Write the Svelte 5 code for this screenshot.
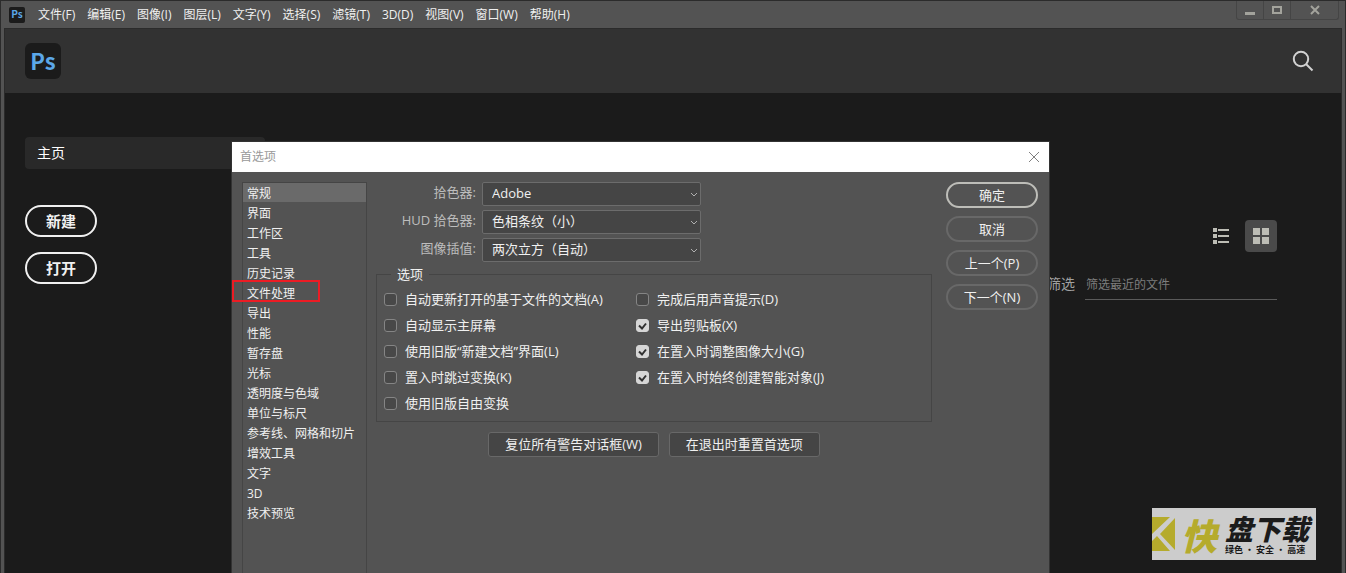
<script lang="ts">
  interface IOption {
    label: string;
    key?: string;
    checked: boolean;
  }

  interface IPicker {
    id: string;
    label: string;
    values: string[];
  }

  const menus = [
    "文件(F)",
    "编辑(E)",
    "图像(I)",
    "图层(L)",
    "文字(Y)",
    "选择(S)",
    "滤镜(T)",
    "3D(D)",
    "视图(V)",
    "窗口(W)",
    "帮助(H)",
  ];

  const sections = [
    "常规",
    "界面",
    "工作区",
    "工具",
    "历史记录",
    "文件处理",
    "导出",
    "性能",
    "暂存盘",
    "光标",
    "透明度与色域",
    "单位与标尺",
    "参考线、网格和切片",
    "增效工具",
    "文字",
    "3D",
    "技术预览",
  ];

  const marked = "文件处理";

  const pickers: IPicker[] = [
    { id: "picker", label: "拾色器:", values: ["Adobe", "Windows"] },
    { id: "hud", label: "HUD 拾色器:", values: ["色相条纹（小）", "色相轮（小）"] },
    { id: "interp", label: "图像插值:", values: ["两次立方（自动）", "两次线性"] },
  ];

  let columns: IOption[][] = $state([
    [
      { label: "自动更新打开的基于文件的文档", key: "A", checked: false },
      { label: "自动显示主屏幕", checked: false },
      { label: "使用旧版“新建文档”界面", key: "L", checked: false },
      { label: "置入时跳过变换", key: "K", checked: false },
      { label: "使用旧版自由变换", checked: false },
    ],
    [
      { label: "完成后用声音提示", key: "D", checked: false },
      { label: "导出剪贴板", key: "X", checked: true },
      { label: "在置入时调整图像大小", key: "G", checked: true },
      { label: "在置入时始终创建智能对象", key: "J", checked: true },
    ],
  ]);

  const actions = ["确定", "取消", "上一个(P)", "下一个(N)"];

  let current = $state("常规");
</script>

<div class="window">
  <header class="titlebar">
    <span class="logo small">Ps</span>
    <nav class="menus">
      {#each menus as menu}
        <button>{menu}</button>
      {/each}
    </nav>
    <div class="controls">
      <button aria-label="最小化">
        <svg width="10" height="10"><path d="M0 8.5h10" stroke-width="3" /></svg>
      </button>
      <button aria-label="最大化">
        <svg width="10" height="10"><path d="M1 2h8v6h-8z" stroke-width="2" /></svg>
      </button>
      <button class="quit" aria-label="关闭">
        <svg width="10" height="10"><path d="M1 1l8 8M9 1l-8 8" stroke-width="2" /></svg>
      </button>
    </div>
  </header>

  <div class="app">
    <div class="topbar">
      <span class="logo">Ps</span>
      <button class="search" aria-label="搜索">
        <svg width="22" height="22" viewBox="0 0 22 22">
          <circle cx="9" cy="9" r="7.2" />
          <path d="M14 14l6.5 6.5" />
        </svg>
      </button>
    </div>

    <main>
      <aside>
        <a class="home" href="#home">主页</a>
        <button class="pill">新建</button>
        <button class="pill">打开</button>
      </aside>

      <section class="recent">
        <div class="views">
          <button aria-label="列表视图">
            <svg width="16" height="16">
              <path d="M0 0h4v4h-4zM0 6h4v4h-4zM0 12h4v4h-4zM5 1h11v2h-11zM5 7h11v2h-11zM5 13h11v2h-11z" />
            </svg>
          </button>
          <button class="active" aria-label="网格视图">
            <svg width="16" height="16">
              <path d="M0 0h7v7h-7zM9 0h7v7h-7zM0 9h7v7h-7zM9 9h7v7h-7z" />
            </svg>
          </button>
        </div>
        <div class="filter">
          <label for="filter">筛选</label>
          <input id="filter" type="text" placeholder="筛选最近的文件" />
        </div>
      </section>
    </main>
  </div>

  <div class="dialog" role="dialog" aria-label="首选项">
    <div class="dialogTitle">
      <span>首选项</span>
      <button aria-label="关闭">
        <svg width="12" height="12"><path d="M1 1l10 10M11 1l-10 10" /></svg>
      </button>
    </div>

    <div class="dialogBody">
      <ul class="sections">
        {#each sections as section}
          <li>
            <button class:selected={section === current} onclick={() => (current = section)}>
              {section}
            </button>
            {#if section === marked}
              <span class="marker"></span>
            {/if}
          </li>
        {/each}
      </ul>

      <form>
        <div class="pickers">
          {#each pickers as picker}
            <label for={picker.id}>{picker.label}</label>
            <div class="selectBox">
              <select id={picker.id}>
                {#each picker.values as value}
                  <option>{value}</option>
                {/each}
              </select>
              <svg width="8" height="6"><path d="M1 1l3 3l3-3" /></svg>
            </div>
          {/each}
        </div>

        <fieldset>
          <legend>选项</legend>
          <div class="options">
            {#each columns as column}
              <div>
                {#each column as option}
                  <label class="option">
                    <input type="checkbox" bind:checked={option.checked} />
                    <svg width="13" height="13"><path d="M3 6.5l3 3l4-5" /></svg>
                    <span>{option.label}{option.key ? `(${option.key})` : ""}</span>
                  </label>
                {/each}
              </div>
            {/each}
          </div>
        </fieldset>

        <div class="resets">
          <button type="button">复位所有警告对话框(W)</button>
          <button type="button">在退出时重置首选项</button>
        </div>
      </form>

      <div class="actions">
        {#each actions as action, i}
          <button class:primary={i === 0}>{action}</button>
        {/each}
      </div>
    </div>
  </div>

  <div class="stamp">
    <svg width="23" height="34" viewBox="0 0 23 34">
      <path d="M0 0h18L0 17zM23 1v32L8 17zM0 24l5-5l13 15H0z" />
    </svg>
    <b class="kuai">快</b>
    <div class="stampText">
      <b>盘下载</b>
      <small>绿色 · 安全 · 高速</small>
    </div>
  </div>
</div>

<style>
  :global(body) {
    background: #1b1b1b;
  }

  .window {
    position: relative;
    box-sizing: border-box;
    display: flex;
    flex-direction: column;
    height: 100vh;
    overflow: hidden;
    padding: 0 3px;
    border: 1px solid #2b2b2b;
    border-bottom: 0;
    background: #535353;
    color: #f0f0f0;
    font-family: "Open Sans", "Noto Sans CJK SC", sans-serif;
    font-size: 13px;
  }

  button,
  input,
  select {
    box-sizing: border-box;
    margin: 0;
    padding: 0;
    border: 0;
    background: none;
    color: inherit;
    font: inherit;
  }

  svg {
    display: block;
    fill: none;
  }

  .titlebar {
    display: flex;
    align-items: center;
    flex: none;
    height: 27px;
    padding-left: 5px;
  }

  .logo {
    box-sizing: border-box;
    width: 36px;
    height: 36px;
    border-radius: 6px;
    background: #1b1b1b;
    color: #5ba7e8;
    font-family: "Noto Sans CJK SC", sans-serif;
    font-size: 22px;
    font-weight: bold;
    line-height: 34px;
    text-align: center;
  }

  .logo.small {
    width: 16px;
    height: 16px;
    border-radius: 2px;
    font-size: 10px;
    line-height: 14px;
  }

  .menus {
    display: flex;
    gap: 12px;
    margin-left: 13px;
    font-size: 12px;
    line-height: 20px;
  }

  .controls {
    display: flex;
    align-self: flex-start;
    margin: 0 3px 0 auto;
    border: 1px solid #454545;
    border-top: 0;
    border-radius: 0 0 3px 3px;
  }

  .controls button {
    display: flex;
    align-items: center;
    justify-content: center;
    width: 27px;
    height: 18px;
    border-right: 1px solid #454545;
  }

  .controls .quit {
    width: 47px;
    border-right: 0;
  }

  .controls svg {
    stroke: #a3a39c;
  }

  .app {
    flex: 1;
    border: 1px solid #2b2b2b;
    border-bottom: 0;
    background: #1b1b1b;
  }

  .topbar {
    display: flex;
    align-items: center;
    justify-content: space-between;
    height: 64px;
    padding: 0 27px 0 20px;
    background: #323232;
  }

  .search svg {
    stroke: #d2d2d2;
    stroke-width: 2;
  }

  main {
    display: grid;
    grid-template-columns: 240px 1fr;
    padding: 44px 64px 0 20px;
  }

  aside {
    display: flex;
    flex-direction: column;
    align-items: flex-start;
  }

  .home {
    box-sizing: border-box;
    width: 100%;
    margin-bottom: 36px;
    padding-left: 12px;
    border-radius: 4px;
    background: #292929;
    color: #fff;
    font-size: 14px;
    line-height: 32px;
    text-decoration: none;
  }

  .pill {
    width: 72px;
    height: 32px;
    margin-bottom: 15px;
    border: 2px solid #f0f0f0;
    border-radius: 16px;
    font-size: 15px;
    font-weight: bold;
    line-height: 26px;
  }

  .recent {
    display: flex;
    flex-direction: column;
    align-items: flex-end;
    padding-top: 83px;
  }

  .views {
    display: flex;
    gap: 8px;
  }

  .views button {
    display: flex;
    align-items: center;
    justify-content: center;
    width: 32px;
    height: 32px;
    border-radius: 4px;
  }

  .views .active {
    background: #4a4a4a;
  }

  .views svg {
    fill: #bdbdb5;
  }

  .filter {
    display: flex;
    gap: 10px;
    margin-top: 16px;
    line-height: 32px;
  }

  .filter label {
    color: #a0a0a0;
    font-size: 14px;
  }

  .filter input {
    width: 192px;
    height: 32px;
    padding: 2px 0 0 1px;
    border-bottom: 1px solid #5a5a5a;
    font-size: 12px;
  }

  .filter input::placeholder {
    color: #7d7d7d;
    opacity: 1;
  }

  .dialog {
    position: absolute;
    top: 140px;
    left: 230px;
    width: 817px;
    border: 1px solid #333;
    background: #535353;
  }

  .dialogTitle {
    display: flex;
    align-items: center;
    justify-content: space-between;
    height: 30px;
    padding: 0 9px 0 8px;
    background: #fff;
    color: #999;
    font-size: 12px;
    line-height: 16px;
  }

  .dialogTitle svg {
    stroke: #808080;
  }

  .dialogBody {
    display: grid;
    grid-template-columns: 125px 1fr 92px;
    padding: 10px 11px 0 10px;
  }

  .sections {
    min-height: 440px;
    margin: 0;
    padding: 0;
    border: 1px solid #454545;
    list-style: none;
    font-size: 12px;
  }

  .sections li {
    position: relative;
    height: 20px;
  }

  .sections button {
    display: block;
    width: 100%;
    height: 19px;
    padding: 1px 0 0 4px;
    line-height: 20px;
    text-align: left;
  }

  .sections .selected {
    background: #6a6a6a;
  }

  .marker {
    position: absolute;
    top: -3px;
    left: -11px;
    box-sizing: border-box;
    width: 88px;
    height: 22px;
    border: 2px solid #ec1c24;
    pointer-events: none;
  }

  form {
    padding: 0 14px 0 9px;
  }

  .pickers {
    display: grid;
    grid-template-columns: 100px 219px;
    gap: 4px 6px;
    line-height: 20px;
  }

  .pickers label {
    color: #bdbdbd;
    text-align: right;
  }

  .selectBox {
    position: relative;
  }

  select {
    display: block;
    appearance: none;
    width: 100%;
    height: 24px;
    padding: 0 24px 2px 9px;
    border: 1px solid #6c6c6c;
    border-radius: 2px;
    background: #454545;
  }

  .selectBox svg {
    position: absolute;
    top: 10px;
    right: 3px;
    stroke: #b0b0b0;
    pointer-events: none;
  }

  fieldset {
    margin: 4px 0 0;
    padding: 4px 8px 5px 7px;
    border: 1px solid #454545;
  }

  legend {
    margin-left: 7px;
    padding: 0 6px;
    line-height: 16px;
  }

  .options {
    display: grid;
    grid-template-columns: 252px 1fr;
  }

  .option {
    position: relative;
    display: flex;
    align-items: center;
    gap: 8px;
    height: 26px;
    line-height: 18px;
    white-space: nowrap;
  }

  .option input {
    appearance: none;
    width: 13px;
    height: 13px;
    border: 1px solid #858585;
    border-radius: 3px;
    background: #484848;
  }

  .option input:checked {
    border-color: #d6d6d6;
    background: #d6d6d6;
  }

  .option svg {
    position: absolute;
    left: 0;
    stroke: #303030;
    stroke-width: 2;
    visibility: hidden;
    pointer-events: none;
  }

  .option input:checked + svg {
    visibility: visible;
  }

  .resets {
    display: flex;
    justify-content: center;
    gap: 10px;
    margin-top: 10px;
  }

  .resets button {
    height: 25px;
    padding: 0 16px;
    border: 1px solid #686868;
    border-radius: 3px;
    background: #454545;
    line-height: 21px;
  }

  .actions {
    display: flex;
    flex-direction: column;
    gap: 8px;
  }

  .actions button {
    height: 26px;
    border: 2px solid #686868;
    border-radius: 13px;
    line-height: 20px;
  }

  .actions .primary {
    border-color: #bdbdb8;
  }

  .stamp {
    position: absolute;
    right: 29px;
    bottom: 13px;
    display: flex;
    align-items: center;
    width: 164px;
    height: 52px;
    background: #ccc;
    color: #1b1b1b;
    font-family: "Noto Sans CJK SC", sans-serif;
  }

  .stamp svg {
    fill: #b5ab2c;
  }

  .kuai {
    margin-left: 6px;
    color: #b5ab2c;
    font-size: 36px;
    font-style: italic;
    font-weight: 900;
    line-height: 48px;
  }

  .stampText {
    display: flex;
    flex-direction: column;
    margin-left: 8px;
    white-space: nowrap;
  }

  .stampText b {
    font-size: 28px;
    font-style: italic;
    font-weight: 900;
    line-height: 32px;
  }

  .stampText small {
    font-size: 9px;
    font-weight: bold;
    line-height: 12px;
  }
</style>
